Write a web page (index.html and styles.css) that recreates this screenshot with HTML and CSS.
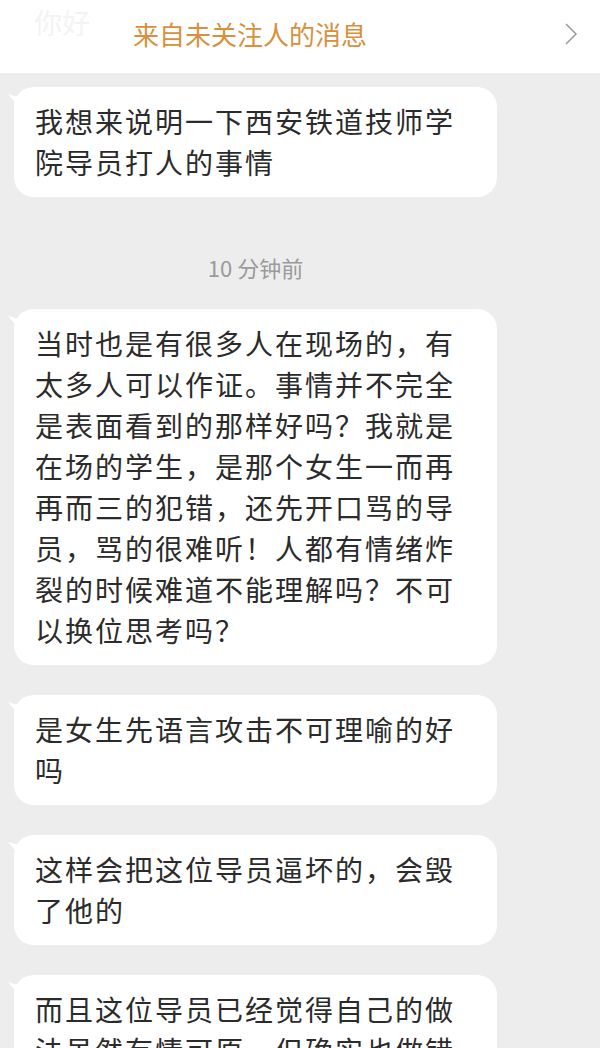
FILE: index.html
```html
<!DOCTYPE html>
<html lang="zh-CN">
<head>
  <meta charset="UTF-8" />
  <meta name="viewport" content="width=device-width, initial-scale=1.0"/>
  <title>来自未关注人的消息</title>
  <link rel="stylesheet" href="styles.css">
</head>
<body>
  <header class="topbar">
    <span class="ghost">你好</span>
    <span class="title">来自未关注人的消息</span>
    <svg class="chevron" width="14" height="22" viewBox="0 0 14 22">
      <polyline points="2,1 12,11 2,21" fill="none" stroke="#9a9a9a" stroke-width="1.5"/>
    </svg>
  </header>

  <main class="chat">
    <div class="bubble">我想来说明一下西安铁道技师学院导员打人的事情</div>

    <div class="time">10 分钟前</div>

    <div class="bubble">当时也是有很多人在现场的，有太多人可以作证。事情并不完全是表面看到的那样好吗？我就是在场的学生，是那个女生一而再再而三的犯错，还先开口骂的导员，骂的很难听！人都有情绪炸裂的时候难道不能理解吗？不可以换位思考吗？</div>

    <div class="bubble">是女生先语言攻击不可理喻的好吗</div>

    <div class="bubble">这样会把这位导员逼坏的，会毁了他的</div>

    <div class="bubble">而且这位导员已经觉得自己的做法虽然有情可原，但确实也做错了</div>
  </main>
</body>
</html>
```

FILE: styles.css
```css
* {
  margin: 0;
  padding: 0;
  box-sizing: border-box;
}

html, body {
  height: 1048px;
  overflow: hidden;
}

body {
  background: #ededed;
  font-family: "Noto Sans CJK SC", "Noto Sans", sans-serif;
  color: #2b2b2b;
}

.topbar {
  height: 73px;
  background: #fff;
  display: flex;
  align-items: center;
  position: relative;
  padding: 0 22px 0 133px;
}

.ghost {
  position: absolute;
  left: 34px;
  top: 2px;
  font-size: 28px;
  color: #f3f3f3;
}

.title {
  font-size: 26px;
  color: #d8903c;
  flex: 1;
  margin-top: -6px;
}

.chevron {
  margin-top: -6px;
}

.chat {
  width: 483px;
  margin-left: 14px;
  padding-top: 14px;
  display: flex;
  flex-direction: column;
  gap: 30px;
}

.bubble {
  position: relative;
  background: #fff;
  border-radius: 20px;
  padding: 14px 21px;
  font-size: 28px;
  line-height: 41px;
  letter-spacing: 2px;
}

.bubble::before {
  content: "";
  position: absolute;
  left: -6px;
  top: 7px;
  width: 12px;
  height: 14px;
  background: #fff;
  clip-path: polygon(0 0, 100% 25%, 100% 100%);
}

.time {
  text-align: center;
  font-size: 22px;
  line-height: 24px;
  color: #9a9a9a;
  margin: 28px 0 0;
}
```
